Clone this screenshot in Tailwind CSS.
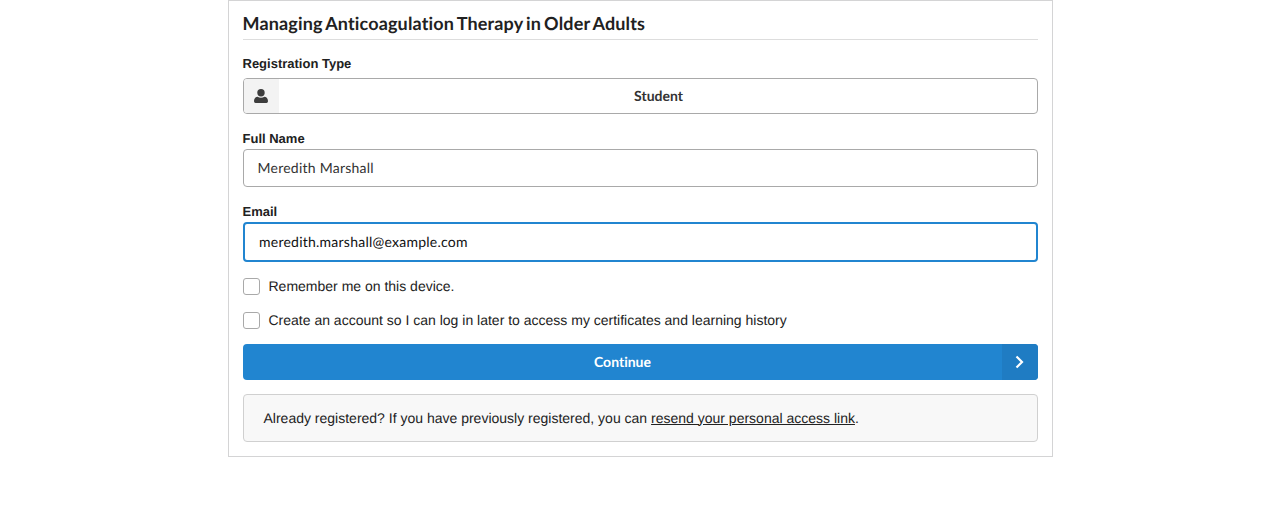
<!DOCTYPE html>
<html>
<head>
<meta charset="utf-8">
<script src="https://cdn.jsdelivr.net/npm/@tailwindcss/browser@4"></script>
</head>
<body class="bg-white font-['Liberation_Sans',sans-serif] text-[#1b1c1d] [text-rendering:geometricPrecision] [font-variant-ligatures:none]">
<div class="mx-auto w-[825px] h-[457px] border border-[#d4d4d5] px-[14px] pt-[10px]">
  <h2 class="font-['Lato',sans-serif] font-bold text-[18px] tracking-[0.15px] [word-spacing:-1.4px] leading-[24px] h-[29px] border-b border-[#dddddd] text-[#212121]">Managing Anticoagulation Therapy in Older Adults</h2>

  <label class="block mt-[16px] text-[13px] leading-[16px] font-bold text-[#212121]">Registration Type</label>
  <div class="mt-[6px] flex h-[36px] border border-[#a9a9a9] rounded-[4px] overflow-hidden">
    <div class="w-[35px] bg-[#f3f3f3] flex items-center justify-center">
      <svg class="w-[14px] h-[14px]" viewBox="0 0 14 14" fill="#3d3d3d"><circle cx="7" cy="3.700" r="3.700"/><path d="M0 12C0 9.300 2 7.800 3.600 7.800c1 .7 2.100 1 3.400 1s2.400-.3 3.400-1c1.600 0 3.600 1.500 3.600 4.200 0 1.200-.7 2-1.500 2H1.500C.7 14 0 13.200 0 12z"/></svg>
    </div>
    <div class="flex-1 flex items-center justify-center pl-[2px] pb-[2px] font-['Lato',sans-serif] font-bold text-[14px] text-[#333333]">Student</div>
  </div>

  <label class="block mt-[17px] text-[13px] leading-[16px] font-bold text-[#212121]">Full Name</label>
  <input class="mt-[2px] block w-full h-[38px] border border-[#a9a9a9] rounded-[4px] pl-[14px] pr-[14px] pb-[2px] font-['Lato',sans-serif] text-[14px] tracking-[0.24px] text-[#333333] bg-white [text-rendering:geometricPrecision] [font-variant-ligatures:none]" value="Meredith Marshall">

  <label class="block mt-[17px] text-[13px] leading-[16px] font-bold text-[#212121]">Email</label>
  <input class="mt-[2px] block w-full h-[40px] border-2 border-[#2185d0] rounded-[4px] pl-[14.5px] pr-[14px] pb-[2px] font-['Lato',sans-serif] text-[14px] tracking-[0.24px] text-[#111111] bg-white [text-rendering:geometricPrecision] [font-variant-ligatures:none]" value="meredith.marshall@example.com">

  <label class="mt-[15px] flex items-center h-[18px] text-[14px] text-[#222222]">
    <span class="w-[17px] h-[17px] border border-[#a9a9a9] rounded-[3px] bg-white mr-[9px]"></span>Remember me on this device.
  </label>
  <label class="mt-[16px] flex items-center h-[18px] text-[14px] text-[#222222]">
    <span class="w-[17px] h-[17px] border border-[#a9a9a9] rounded-[3px] bg-white mr-[9px]"></span>Create an account so I can log in later to access my certificates and learning history
  </label>

  <button class="mt-[15px] flex w-full h-[36px] bg-[#2185d0] rounded-[4px] overflow-hidden text-white font-['Lato',sans-serif] font-bold text-[14px] [text-rendering:geometricPrecision]">
    <span class="flex-1 h-full flex items-center justify-center pb-[2px] pl-[1px]">Continue</span>
    <span class="w-[36px] h-full bg-[#1f7cc3] flex items-center justify-center pr-[2px]">
      <svg class="w-[10px] h-[14px]" viewBox="0 0 10 14" fill="none" stroke="white" stroke-width="2.200"><path d="M2.500 1.500L8 7L2.500 12.500"/></svg>
    </span>
  </button>

  <div class="mt-[14px] h-[48px] border border-[#d0d0d0] rounded-[4px] bg-[#f8f8f8] flex items-center px-[20px] text-[14px] text-[#222222]">
    <p>Already registered? If you have previously registered, you can <a class="underline">resend your personal access link</a>.</p>
  </div>
</div>
</body>
</html>
